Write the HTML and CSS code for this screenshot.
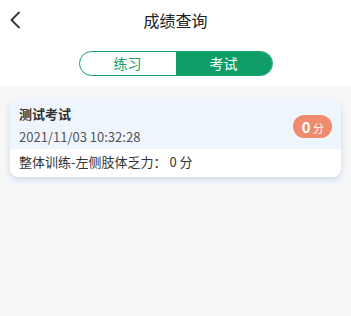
FILE: index.html
```html
<!DOCTYPE html>
<html lang="zh">
<head>
    <meta charset="UTF-8">
    <meta name="viewport" content="width=device-width, initial-scale=1.0">
    <title>成绩查询</title>
    <link rel="stylesheet" href="styles.css">
</head>
<body>

    <div class="header">
        <div class="nav">
            <svg class="back" width="12" height="18" viewBox="0 0 12 18">
                <path d="M10 1.5 L2.5 9 L10 16.5" fill="none" stroke="#333" stroke-width="1.8" stroke-linecap="round" stroke-linejoin="round"/>
            </svg>
            <h1>成绩查询</h1>
        </div>

        <!-- 切换 练习 / 考试 -->
        <div class="tabs">
            <div class="tab">练习</div>
            <div class="tab active">考试</div>
        </div>
    </div>

    <div class="list">
        <div class="card">
            <div class="card-top">
                <div class="info">
                    <div class="name">测试考试</div>
                    <div class="time">2021/11/03 10:32:28</div>
                </div>
                <div class="score"><b>0</b> 分</div>
            </div>
            <div class="card-bottom">整体训练-左侧肢体乏力： 0 分</div>
        </div>
    </div>

</body>
</html>
```

FILE: styles.css
```css
body {
    margin: 0;
    padding: 0;
    font-family: 'Noto Sans CJK SC', 'Noto Sans', sans-serif;
    background-color: #f7f7f8;
    color: #333;
    height: 316px;
}

.header {
    background-color: #fff;
    padding-bottom: 10px;
}

.nav {
    position: relative;
    height: 40px;
    display: flex;
    align-items: center;
    justify-content: center;
}

.back {
    position: absolute;
    left: 9px;
    top: 11px;
}

.nav h1 {
    margin: 0;
    font-size: 16px;
    font-weight: normal;
    color: #222;
}

.tabs {
    display: flex;
    width: 194px;
    height: 25px;
    margin: 11px auto 0;
    border: 1px solid #16a06b;
    border-radius: 13px;
    overflow: hidden;
    box-sizing: border-box;
}

.tab {
    flex: 1;
    text-align: center;
    font-size: 14px;
    line-height: 23px;
    color: #16a06b;
}

.tab.active {
    background-color: #0f9e68;
    color: #fff;
}

.list {
    padding: 13px 10px;
}

.card {
    background-color: #fff;
    border-radius: 8px;
    overflow: hidden;
    box-shadow: 0 3px 6px rgba(120, 170, 200, 0.35);
}

.card-top {
    background-color: #eef5fd;
    display: flex;
    align-items: center;
    justify-content: space-between;
    padding: 5px 9px 2px 9px;
}

.name {
    font-size: 13px;
    font-weight: bold;
    color: #333;
    line-height: 20px;
}

.time {
    font-size: 13px;
    color: #555;
    line-height: 20px;
    margin-top: 3px;
}

.score {
    background-color: #ef8b6f;
    color: #fff;
    border-radius: 12px;
    height: 23px;
    line-height: 23px;
    padding: 0 8px 0 9px;
    font-size: 11px;
    margin-top: 2px;
}

.score b {
    font-size: 15px;
}

.card-bottom {
    font-size: 13px;
    color: #333;
    padding: 3px 9px 6px;
    line-height: 19px;
}
```
